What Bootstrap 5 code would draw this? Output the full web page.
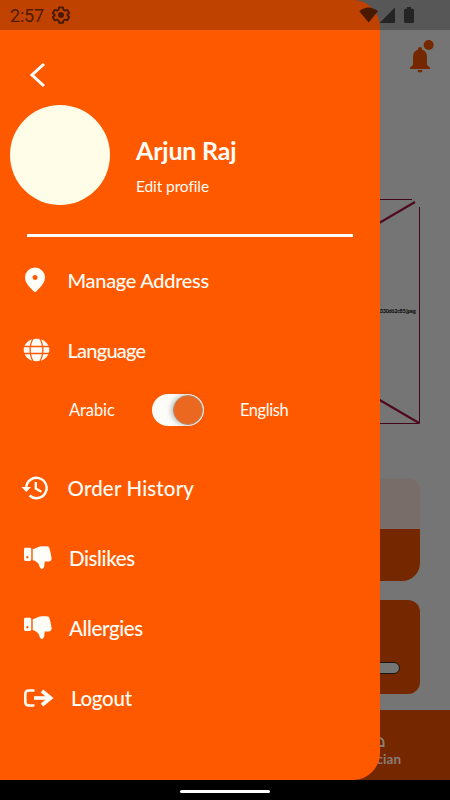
<!DOCTYPE html>
<html lang="en">
<head>
<meta charset="utf-8">
<meta name="viewport" content="width=device-width, initial-scale=1">
<title>Profile menu</title>
<link href="https://cdn.jsdelivr.net/npm/bootstrap@5.3.0/dist/css/bootstrap.min.css" rel="stylesheet">
<style>
body{font-family:"Gill Sans","Gill Sans MT",Lato,sans-serif;background:#000}
svg{display:block;flex:none}
.phone{width:450px;height:800px}
.screen{height:780px;background:#757575}
.home-head{height:199px;padding:39px 16px 0 0}
.photo{margin-left:36px;height:225px;width:385px}
.promo{width:390px;height:102px;margin:55px 0 0 30px;border-radius:11px 11px 18px 18px;background:linear-gradient(#786d69 50px,#752800 50px)}
.plan{width:390px;height:94px;margin:19px 0 0 30px;border-radius:12px;background:#752800;padding:62px 20px 0 0}
.meter{width:200px;height:12px;border:1.5px solid #161616;background:#757575}
.tabs{height:70px;margin-top:16px;background:#752800;color:#8b7d75;font-size:13.5px;font-weight:700;line-height:20px;padding:24px 49px 0 0}
.tabs svg{margin-right:16px}
.drawer{width:380px;height:780px;background:#ff5900;color:#fffdf7;border-radius:0 27px 27px 0;padding-top:62px}
.status{height:30px;background:rgba(0,0,0,.25);color:rgba(0,0,0,.62);font:18px/31px Roboto,sans-serif;padding-left:10px}
.clock{width:42px;letter-spacing:-.2px}
.status-right{width:57px;height:17px;margin:7px 34px 0 0}
.back{margin-left:29px}
.profile{height:100px;margin:17px 0 0 10px}
.avatar{width:100px;height:100px;background:#fffde8}
.who{padding:30px 0 0 26px}
.name{font-size:25px;line-height:31px;font-weight:700;letter-spacing:-.2px}
.edit{font-size:15.5px;line-height:20px;margin-top:10px;letter-spacing:-.1px}
.rule{height:3px;background:#fff;margin:28.500px 27px 0}
.item{height:40px;font-size:20.5px;font-weight:500;padding-left:20px}
.ico{width:47.500px}
.ico-wide{width:49px}
.ico-last{width:51px}
.t-address{font-size:20px;letter-spacing:-.3px}
.t-language{font-size:20px;letter-spacing:-.75px}
.t-history{letter-spacing:.15px}
.t-dislikes{letter-spacing:-.4px}
.t-allergies{letter-spacing:-.4px}
.t-logout{letter-spacing:-.3px}
.stack{gap:30px;margin-top:23.500px}
.lang{height:32px;margin:-6px 0 12px;padding-left:69px;font-size:16.5px}
.lang-from{width:83px;letter-spacing:-.1px}
.lang-to{margin-left:36px;letter-spacing:-.45px}
.toggle{width:52px;height:32px;background:#fcfcf8;padding:1px}
.knob{width:30px;height:30px;background:#eb6821;border:1px solid #b88a6c;box-shadow:-2px 0 5px rgba(0,0,0,.25)}
.sysnav{height:20px;background:#000;padding-top:10px}
.pill{width:90px;height:3px;background:#fff}
</style>
<script src="https://cdn.jsdelivr.net/npm/bootstrap@5.3.0/dist/js/bootstrap.bundle.min.js"></script>
</head>
<body>
<svg width="0" height="0" class="position-absolute"><defs>
  <symbol id="thumb-down" viewBox="0 0 30 28"><path fill="#fffdf7" fill-rule="evenodd" d="M1.500 3.500h4.500q1.500 0 1.500 1.500v10.500q0 1.500-1.500 1.500H1.500Q0 17 0 15.500V5Q0 3.500 1.500 3.500zm2 8.500a1.200 1.200 0 1 0 0 2.400 1.200 1.200 0 0 0 0-2.400zM9 5C12 4 15 1.800 19 1.800h4.500c2 0 3 1.200 3 3.200 1 2.500 1.600 6 2 9 .3 2-.9 3.500-3 3.500H21.500c-.5 2.500-.2 5.500-1.500 7-1 1-2.900.7-3.500-.7L15 20c-1.500-2-3.500-3.500-6-3.700z"/></symbol>
</defs></svg>
<div class="phone position-relative overflow-hidden">
  <main class="screen">
    <header class="home-head d-flex justify-content-end">
      <svg width="26" height="36" viewBox="0 0 26 36" fill="#752800"><circle cx="20.700" cy="6" r="5"/><path d="M2 30v-1.200l3-3V18c0-4 2-6.500 5-7.200v-.8a2 2 0 0 1 4 0v.8c3 .7 5 3.200 5 7.200v7.800l3 3V30zM9.500 31h5a2.500 2.500 0 0 1-5 0z"/></svg>
    </header>
    <svg class="photo" viewBox="0 0 385 225" fill="none" stroke="#500a1e"><path d="M8 .5H376M383.500 8V224.500H.5V8" stroke="#430817"/><path d="M5 3 383 224M5 222 379 3" stroke-width="2.200"/><text x="379.500" y="114" text-anchor="end" font-size="5.600" font-weight="900" letter-spacing="-.35" fill="#111" stroke="none">5f3e8a7c21b94d06a7e330d62c85.jpeg</text></svg>
    <section class="promo"></section>
    <section class="plan d-flex justify-content-end"><div class="meter rounded-pill"></div></section>
    <nav class="tabs d-flex flex-column align-items-end">
      <svg width="20" height="15" viewBox="0 0 20 15" fill="none" stroke="#8b7d75" stroke-width="2"><path d="M3 12V8a4 4 0 0 1 4-4h7a4.500 4.500 0 0 1 4.500 4.500V12H14V8.500"/></svg>
      <span>Dietician</span>
    </nav>
  </main>

  <aside class="drawer position-absolute top-0 start-0">
    <svg class="back" width="17" height="26" viewBox="0 0 17 26" fill="none" stroke="#fff" stroke-width="3"><path d="M15 2 3 13 15 24"/></svg>
    <div class="profile d-flex">
      <div class="avatar rounded-circle"></div>
      <div class="who"><div class="name">Arjun Raj</div><div class="edit">Edit profile</div></div>
    </div>
    <div class="rule"></div>
    <div class="stack d-flex flex-column">
      <div class="item d-flex align-items-center">
        <div class="ico"><svg width="30" height="28" viewBox="0 0 30 28"><path fill="#fffdf7" fill-rule="evenodd" d="M15 1.500A10 10 0 0 0 5 11.500c0 5.500 5 10 8.500 13.800q1.500 1.500 3 0C20 21.500 25 17 25 11.500a10 10 0 0 0-10-10zm0 7.500a2.500 2.500 0 1 1 0 5 2.500 2.500 0 0 1 0-5z"/></svg></div>
        <span class="t-address">Manage Address</span>
      </div>
      <div class="item d-flex align-items-center">
        <div class="ico"><svg width="32" height="24" viewBox="0 0 32 24"><ellipse cx="16.500" cy="12" rx="12.800" ry="11.200" fill="#fffdf7"/><path d="M3 8.500h27M3 15.500h27M13.500 0c-4.500 7-4.500 17 0 24M19.500 0c4.500 7 4.500 17 0 24" fill="none" stroke="#ff5900" stroke-width="1.300"/></svg></div>
        <span class="t-language">Language</span>
      </div>
      <div class="lang d-flex align-items-center">
        <span class="lang-from">Arabic</span>
        <div class="toggle rounded-pill d-flex justify-content-end"><div class="knob rounded-circle"></div></div>
        <span class="lang-to">English</span>
      </div>
      <div class="item d-flex align-items-center">
        <div class="ico"><svg width="30" height="28" viewBox="0 0 30 28" fill="none" stroke="#fffdf7" stroke-width="2.400"><path d="M6.200 14a10.200 10.200 0 1 1 3.300 7.500M15.800 8v6.500l5.500 3.300"/><path d="M1.500 13h9.500l-4.700 5z" fill="#fffdf7" stroke="none"/></svg></div>
        <span class="t-history">Order History</span>
      </div>
      <div class="item d-flex align-items-center">
        <div class="ico-wide ps-1"><svg width="29" height="28"><use href="#thumb-down"/></svg></div>
        <span class="t-dislikes">Dislikes</span>
      </div>
      <div class="item d-flex align-items-center">
        <div class="ico-wide ps-1"><svg width="29" height="28"><use href="#thumb-down"/></svg></div>
        <span class="t-allergies">Allergies</span>
      </div>
      <div class="item d-flex align-items-center">
        <div class="ico-last ps-1"><svg width="30" height="20" viewBox="0 0 30 20" fill="none" stroke="#fffdf7"><path d="M10.500 2.500H5Q1.300 2.500 1.300 6v8q0 3.500 3.700 3.500h5.500" stroke-width="2.500"/><path d="M10 10h15" stroke-width="3.600"/><path d="m18 3 8.500 7L18 17" stroke-width="3.800"/></svg></div>
        <span class="t-logout">Logout</span>
      </div>
    </div>
  </aside>

  <div class="status position-absolute top-0 start-0 w-100 d-flex justify-content-between">
    <div class="d-flex"><span class="clock">2:57</span>
      <svg width="18" height="31" viewBox="1.500 -5.600 21 36.200" fill="none" stroke="#4a1a00" stroke-width="2.200"><path stroke-linejoin="round" d="m9.700 3-.5 2.700-2 1.100-2.600-.9-2.200 3.800L4.500 11.400v1.200l-2.100 1.700 2.200 3.800 2.600-.9 2 1.100.5 2.700h4.600l.5-2.700 2-1.100 2.600.9 2.200-3.800-2.100-1.700v-1.200l2.100-1.700-2.200-3.800-2.600.9-2-1.100-.5-2.700z"/><circle cx="12" cy="12" r="2.400" fill="#4a1a00"/></svg>
    </div>
    <svg class="status-right" viewBox="0 0 57 17" fill="#242424"><path d="M.3 4.300Q9.500-3.200 19 4.300L9.600 15.500z" fill="#4a1a00"/><path d="M20.500 16H36V.5zM48 1.800V0h4v1.800h1.500Q55 1.800 55 3.300v11.200q0 1.500-1.500 1.500h-7Q45 16 45 14.500V3.300q0-1.500 1.500-1.500z"/></svg>
  </div>
  <footer class="sysnav"><div class="pill mx-auto rounded-pill"></div></footer>
</div>
</body>
</html>
